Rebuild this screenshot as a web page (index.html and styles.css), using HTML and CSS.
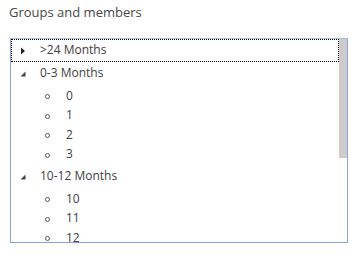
FILE: index.html
```html
<!DOCTYPE html>
<html>
<head>
<meta charset="utf-8">
<link rel="stylesheet" href="styles.css">
</head>
<body>
<div class="title">Groups and members</div>
<div class="tree">
  <div class="content">
    <div class="row group focus">
      <span class="exp"><svg width="6" height="8" viewBox="0 0 6 8"><path d="M1 0.5 L5 4 L1 7.5 Z" fill="#222"/></svg></span>
      <span class="label">&gt;24 Months</span>
    </div>
    <div class="row group">
      <span class="exp"><svg width="6" height="8" viewBox="0 0 6 8"><path d="M5.5 1.5 L5.5 6.5 L0.5 6.5 Z" fill="#444"/></svg></span>
      <span class="label">0-3 Months</span>
    </div>
    <ul class="items">
      <li class="row item"><span class="dot"></span><span class="label">0</span></li>
      <li class="row item"><span class="dot"></span><span class="label">1</span></li>
      <li class="row item"><span class="dot"></span><span class="label">2</span></li>
      <li class="row item"><span class="dot"></span><span class="label">3</span></li>
    </ul>
    <div class="row group">
      <span class="exp"><svg width="6" height="8" viewBox="0 0 6 8"><path d="M5.5 1.5 L5.5 6.5 L0.5 6.5 Z" fill="#444"/></svg></span>
      <span class="label">10-12 Months</span>
    </div>
    <ul class="items">
      <li class="row item"><span class="dot"></span><span class="label">10</span></li>
      <li class="row item"><span class="dot"></span><span class="label">11</span></li>
      <li class="row item"><span class="dot"></span><span class="label">12</span></li>
    </ul>
  </div>
  <div class="scroll"><div class="thumb"></div></div>
</div>
</body>
</html>
```
FILE: styles.css
```css
html, body {
  margin: 0;
  padding: 0;
  background: #fff;
}
body {
  font-family: "Open Sans", "Noto Sans", sans-serif;
  color: #404040;
}
.title {
  font-size: 13px;
  line-height: 18px;
  padding: 3px 0 0 9px;
  height: 17px;
  color: #474747;
}
.tree {
  margin: 18px 0 0 10px;
  width: 338px;
  height: 205px;
  box-sizing: border-box;
  border: 1px solid #86a4d8;
  border-top-color: #a9bde0;
  display: flex;
  overflow: hidden;
}
.content {
  flex: 1;
  min-width: 0;
}
.scroll {
  width: 8px;
  flex: none;
}
.thumb {
  height: 119px;
  background: #cdcbcb;
}
.row {
  display: flex;
  align-items: center;
  font-size: 12px;
  box-sizing: border-box;
}
.group {
  height: 23px;
}
.focus {
  outline: 1px dotted #000;
  outline-offset: -1px;
}
.exp {
  width: 29px;
  padding-left: 9px;
  box-sizing: border-box;
  display: flex;
  align-items: center;
}
.items {
  list-style: none;
  margin: 0;
  padding: 2px 0 0 0;
}
.item {
  height: 19.5px;
}
.dot {
  width: 5px;
  height: 5px;
  box-sizing: border-box;
  border: 1px solid #5a5a5a;
  border-radius: 50%;
  margin-left: 34px;
  margin-right: 16px;
}
.label {
  white-space: nowrap;
  line-height: 16px;
  margin-bottom: 2px;
}
```
